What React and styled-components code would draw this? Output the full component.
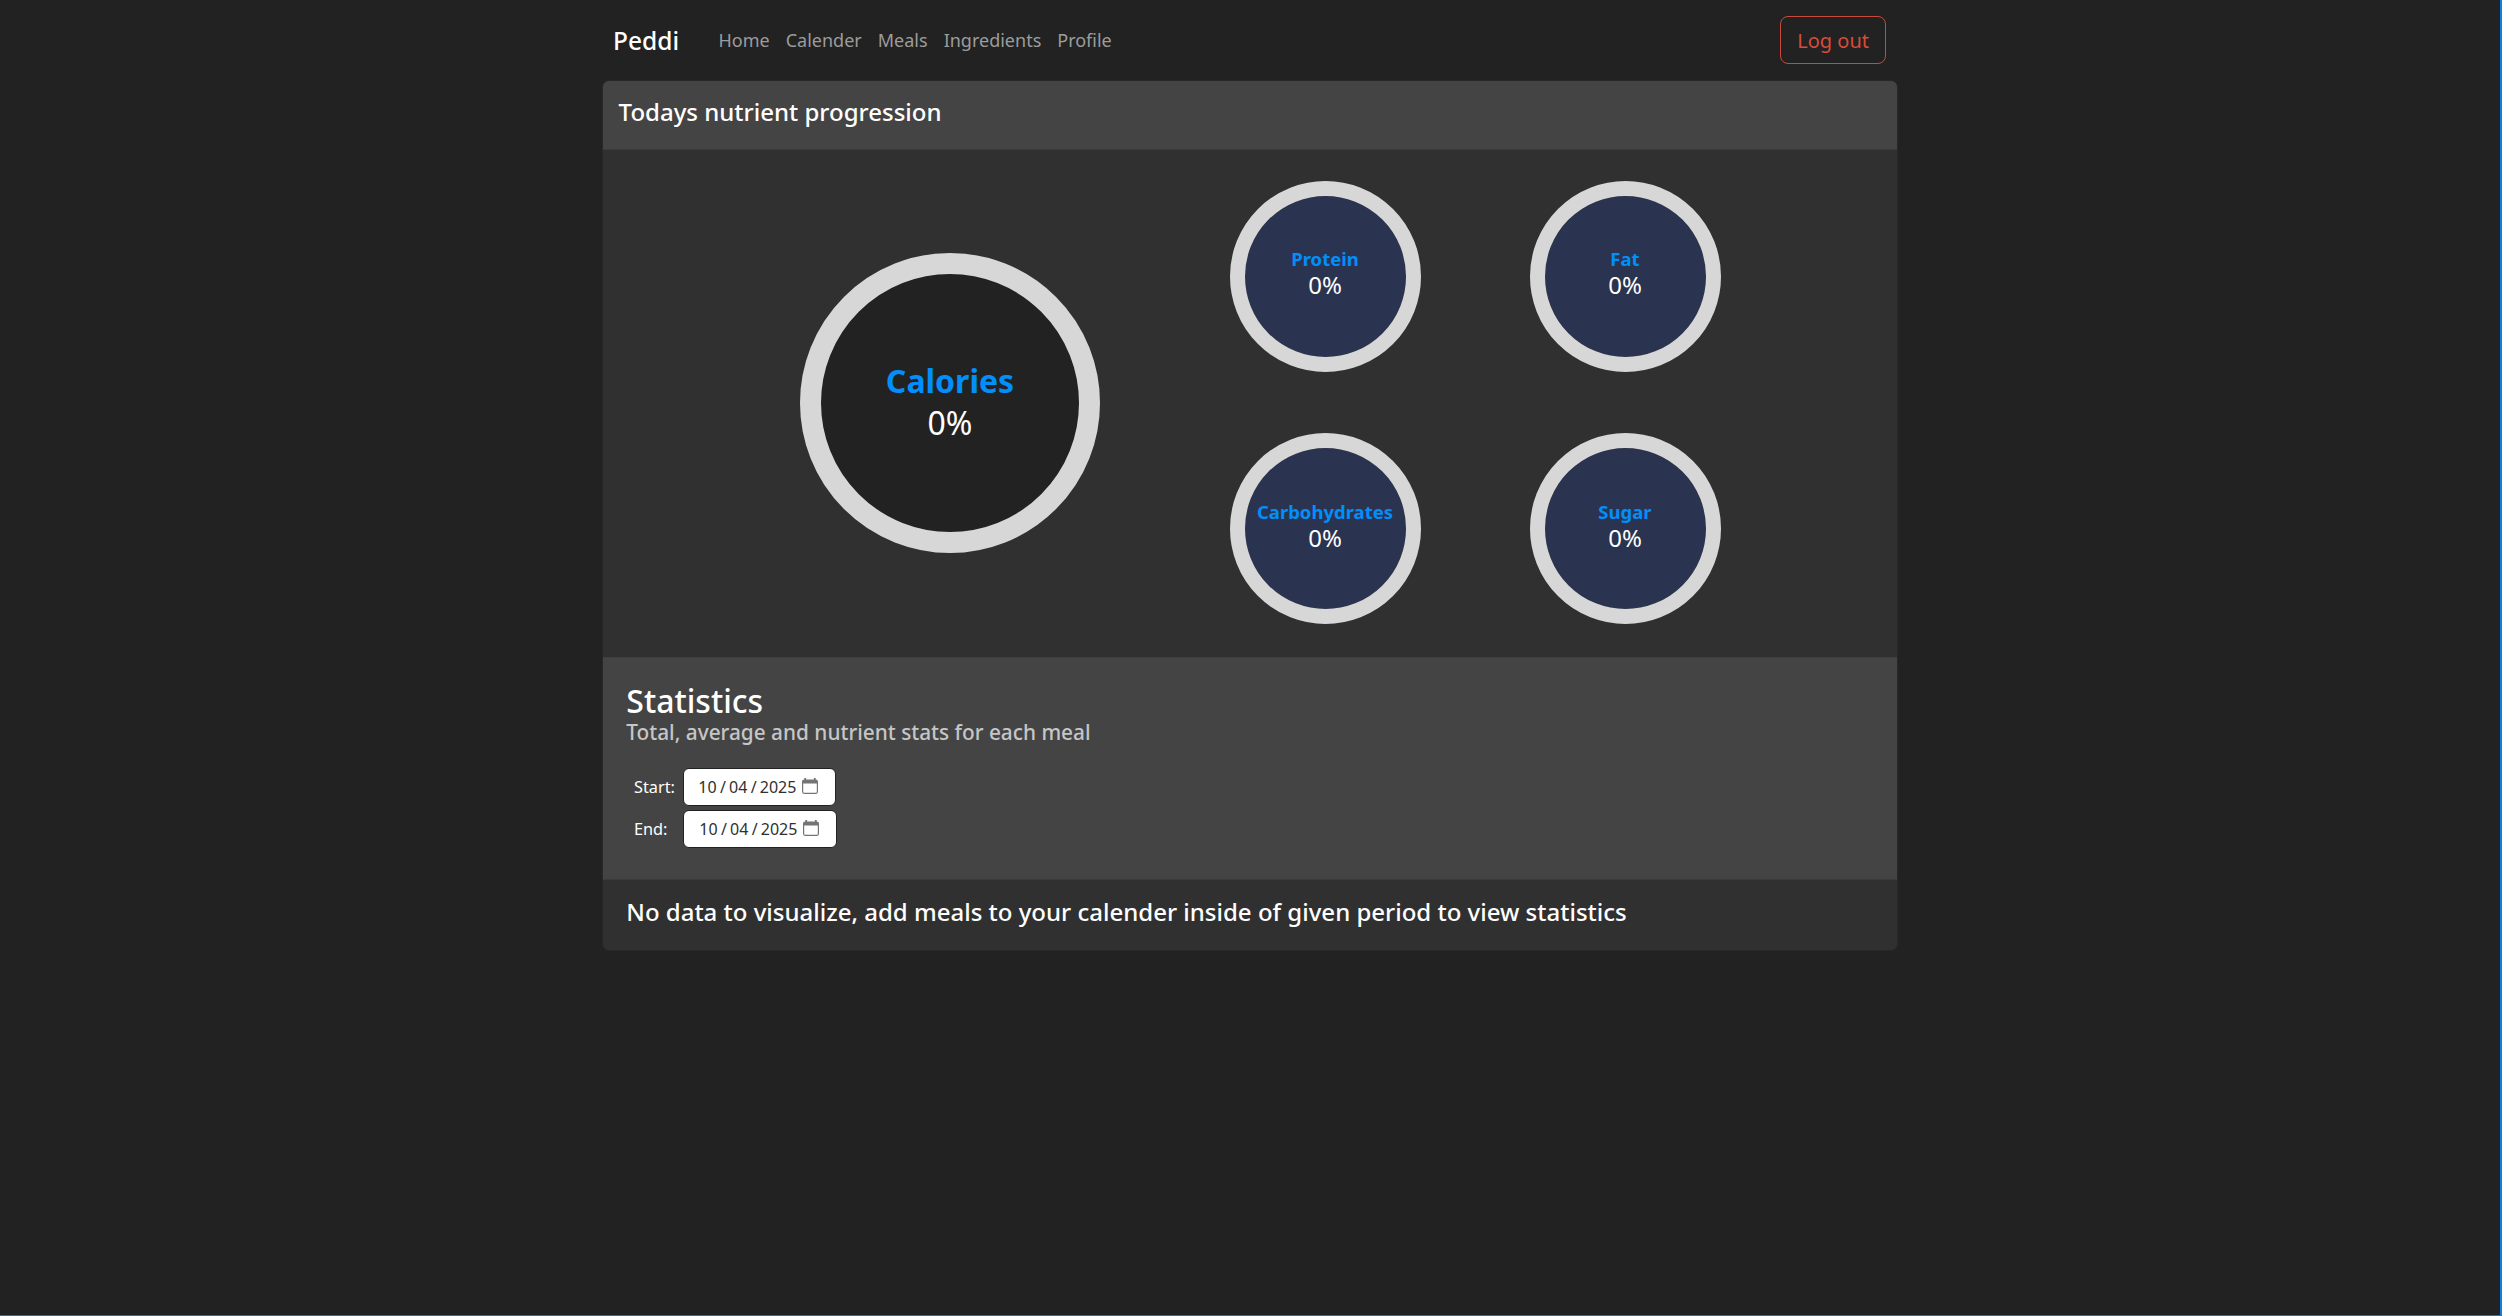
import React from "react";
import styled, { createGlobalStyle } from "styled-components";

const GlobalStyle = createGlobalStyle`
  *, *::before, *::after { box-sizing: border-box; }
  html { background: #222; }
  body {
    margin: 0;
    background: #222;
    color: #fff;
    font-family: "Noto Sans", "Liberation Sans", sans-serif;
    font-size: 16px;
  }
  h1, h2, h3, p { margin: 0; font-weight: 500; }
`;

const Page = styled.div`
  min-height: 1316px;
  border-right: 2px solid #1080e0;
  border-bottom: 1px solid #1c74b5;
`;

const Container = styled.div`
  width: 1296px;
  margin: 0 auto;
`;

const Navbar = styled.nav`
  display: flex;
  align-items: center;
  height: 80px;
  padding: 0 12px 0 11px;
`;

const Brand = styled.a`
  width: 97.5px;
  padding-top: 1px;
  font-size: 24.5px;
  font-weight: 500;
  line-height: 30px;
  color: #fff;
`;

const NavLinks = styled.div`
  display: flex;
  flex: 1;
`;

const NavLink = styled.a`
  padding: 0 8px;
  font-size: 18px;
  line-height: 27px;
  color: #9c9c9c;
`;

const LogoutButton = styled.button`
  height: 48px;
  padding: 1px 16px 0;
  border: 1px solid #c74a3b;
  border-radius: 8px;
  background: transparent;
  color: #d64c3c;
  font: 400 20px/30px "Noto Sans", sans-serif;
`;

const Card = styled.main`
  border: 1px solid #282828;
  border-radius: 7px;
  background: #303030;
  overflow: hidden;
`;

const CardHeader = styled.header`
  height: 69px;
  padding: 16px 15.6px;
  background: #444;
  border-bottom: 1px solid #3b3b3b;
`;

const CardTitle = styled.h2`
  font-size: 24px;
  line-height: 29px;
`;

const Progression = styled.section`
  display: grid;
  grid-template-columns: 450px 300px 300px;
  grid-template-rows: 252px 253px;
  justify-content: center;
  place-items: center;
  padding-bottom: 2px;
`;

const Ring = styled.div`
  display: flex;
  flex-direction: column;
  align-items: center;
  justify-content: center;
  grid-row: ${(p) => (p.$large ? "span 2" : "auto")};
  width: ${(p) => (p.$large ? 300 : 191)}px;
  height: ${(p) => (p.$large ? 300 : 191)}px;
  border: ${(p) => (p.$large ? 21 : 15)}px solid #d7d7d7;
  border-radius: 50%;
  background: ${(p) => (p.$large ? "#222" : "#2a3450")};
  background-clip: padding-box;
`;

const RingLabel = styled.span`
  font-size: ${(p) => (p.$large ? 32 : 18.5)}px;
  line-height: ${(p) => (p.$large ? 40 : 18)}px;
  font-weight: 700;
  color: #008ffb;
`;

const RingValue = styled.span`
  font-size: ${(p) => (p.$large ? 32 : 24)}px;
  line-height: ${(p) => (p.$large ? 44 : 34)}px;
  color: #fff;
`;

const StatsHeader = styled.header`
  height: 223px;
  padding: 24px 23.3px;
  background: #444;
  border-top: 1px solid #3f3f3f;
  border-bottom: 1px solid #3b3b3b;
`;

const StatsTitle = styled.h2`
  font-size: 32px;
  line-height: 38px;
`;

const StatsSubtitle = styled.h3`
  font-size: 20.8px;
  line-height: 25px;
  color: #c6c6c6;
`;

const Period = styled.form`
  display: grid;
  grid-template-columns: 49px max-content;
  row-gap: 4px;
  align-items: center;
  margin-top: 23px;
  padding-left: 7.7px;
`;

const PeriodLabel = styled.label`
  font-size: 16.3px;
  line-height: 24px;
`;

const DateField = styled.div`
  display: flex;
  align-items: center;
  width: ${(p) => p.$width}px;
  height: 38px;
  padding-left: ${(p) => p.$inset}px;
  border: 1px solid #222;
  border-radius: 6px;
  background: #fff;
  color: #303030;
  font-size: 16px;
  line-height: 24px;

  svg { margin: 0 0 2px 5.7px; }
`;

const DateSlash = styled.span`
  margin: 0 3px 0 3.5px;
`;

const StatsBody = styled.section`
  height: 70px;
  padding: 17px 23.3px;
`;

const EmptyMessage = styled.p`
  font-size: 24px;
  line-height: 29px;
`;

const links = ["Home", "Calender", "Meals", "Ingredients", "Profile"];
const nutrients = ["Protein", "Fat", "Carbohydrates", "Sugar"];

function CalendarIcon() {
  return (
    <svg width="16" height="16" viewBox="0 0 16 16" fill="#757575">
      <path fillRule="evenodd" d="M2.3 0h1.8v1.4h7.8V0h1.8v1.4c1.3 0 2.3.9 2.3 2.2v10.2c0 1.2-.9 2.1-2.1 2.1H2.1A2.1 2.1 0 0 1 0 13.8V3.6c0-1.3 1-2.2 2.300-2.200zM1.200 5.400v8.400c0 .6.4 1 1 1h11.600c.6 0 1-.4 1-1V5.400z" />
    </svg>
  );
}

function NutrientRing({ label, value, large }) {
  return (
    <Ring $large={large}>
      <RingLabel $large={large}>{label}</RingLabel>
      <RingValue $large={large}>{value}%</RingValue>
    </Ring>
  );
}

function DateInput({ month, day, year, width, inset }) {
  return (
    <DateField $width={width} $inset={inset}>
      <span>{month}</span>
      <DateSlash>/</DateSlash>
      <span>{day}</span>
      <DateSlash>/</DateSlash>
      <span>{year}</span>
      <CalendarIcon />
    </DateField>
  );
}

export default function App() {
  return (
    <Page>
      <GlobalStyle />
      <Container>
        <Navbar>
          <Brand>Peddi</Brand>
          <NavLinks>
            {links.map((name) => (
              <NavLink key={name}>{name}</NavLink>
            ))}
          </NavLinks>
          <LogoutButton>Log out</LogoutButton>
        </Navbar>
        <Card>
          <CardHeader>
            <CardTitle>Todays nutrient progression</CardTitle>
          </CardHeader>
          <Progression>
            <NutrientRing label="Calories" value={0} large />
            {nutrients.map((name) => (
              <NutrientRing key={name} label={name} value={0} />
            ))}
          </Progression>
          <StatsHeader>
            <StatsTitle>Statistics</StatsTitle>
            <StatsSubtitle>Total, average and nutrient stats for each meal</StatsSubtitle>
            <Period>
              <PeriodLabel>Start:</PeriodLabel>
              <DateInput month="10" day="04" year="2025" width={153} inset={14.3} />
              <PeriodLabel>End:</PeriodLabel>
              <DateInput month="10" day="04" year="2025" width={154} inset={15.3} />
            </Period>
          </StatsHeader>
          <StatsBody>
            <EmptyMessage>
              No data to visualize, add meals to your calender inside of given period to view statistics
            </EmptyMessage>
          </StatsBody>
        </Card>
      </Container>
    </Page>
  );
}
